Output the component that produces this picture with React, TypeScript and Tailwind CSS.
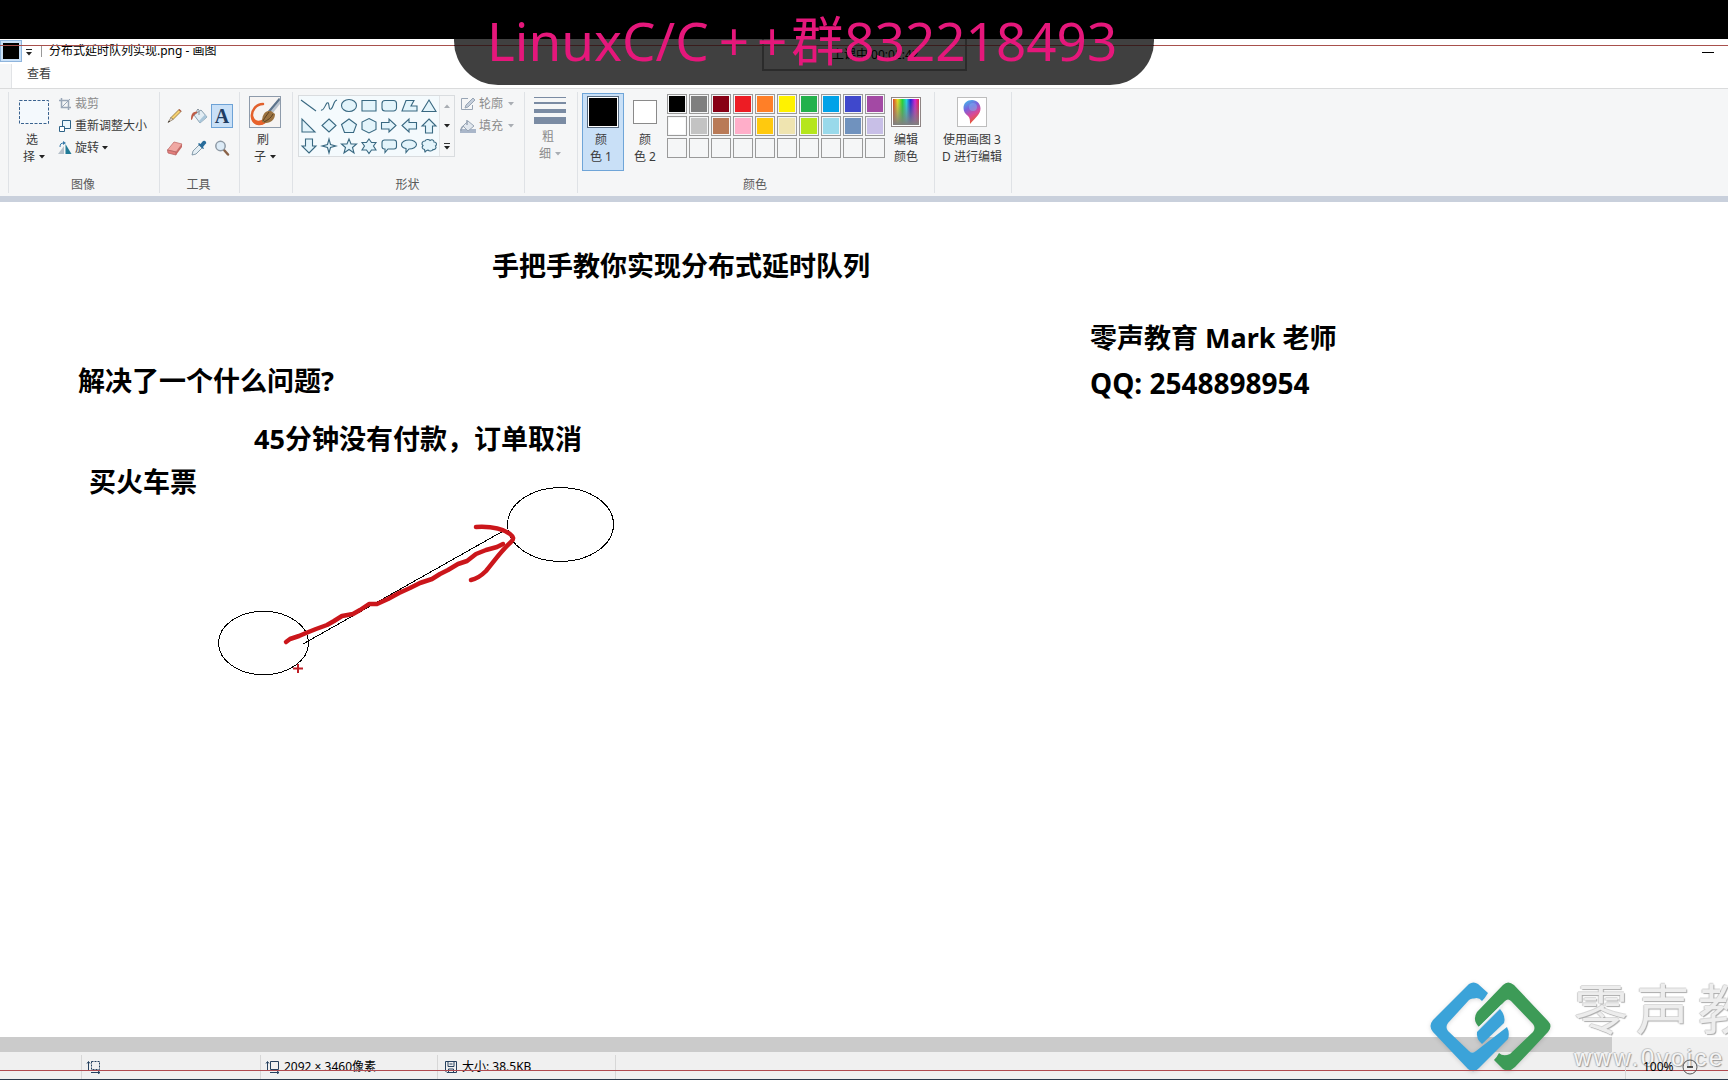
import type { ReactNode } from "react";

const paletteTop = ["#000000", "#7f7f7f", "#880015", "#ed1c24", "#ff7f27", "#fff200", "#22b14c", "#00a2e8", "#3f48cc", "#a349a4"];
const paletteMiddle = ["#ffffff", "#c3c3c3", "#b97a57", "#ffaec9", "#ffc90e", "#efe4b0", "#b5e61d", "#99d9ea", "#7092be", "#c8bfe7"];

const shapes: { name: string; d: string }[] = [
  { name: "直线", d: "M1 3 16 14" },
  { name: "曲线", d: "M1 13C4 14 5 8 7 6C10 4 8 14 11 12C14 10 13 4 17 3" },
  { name: "椭圆形", d: "M1.5 8.5a7.5 6 0 1 0 15 0a7.5 6 0 1 0 -15 0Z" },
  { name: "矩形", d: "M2 3.5H16V14H2Z" },
  { name: "圆角矩形", d: "M5 3.5H13.500a3 3 0 0 1 3 3V11a3 3 0 0 1 -3 3H5a3 3 0 0 1 -3 -3V6.500a3 3 0 0 1 3 -3Z" },
  { name: "多边形", d: "M6 3.500H14L11 9H17V14H2Z" },
  { name: "三角形", d: "M9 3 16 14.500H2Z" },
  { name: "直角三角形", d: "M2 2V15H15Z" },
  { name: "菱形", d: "M9 2 16 8.500 9 15 2 8.500Z" },
  { name: "五边形", d: "M9 2 16.500 7.500 13.500 15.500H4.500L1.500 7.500Z" },
  { name: "六边形", d: "M9 1.500 16 5V12.500L9 16 2 12.500V5Z" },
  { name: "右箭头", d: "M1.500 5.500H9V2L16 8.500 9 15V12H1.500Z" },
  { name: "左箭头", d: "M16.500 5.500H9V2L2 8.500 9 15V12H16.500Z" },
  { name: "向上箭头", d: "M9 2 16 9H12.500V16H5.500V9H2Z" },
  { name: "向下箭头", d: "M9 16 16 9H12.500V2H5.500V9H2Z" },
  { name: "四角星", d: "M9 2 10.500 7.500 16 9 10.500 10.500 9 16 7.500 10.500 2 9 7.500 7.500Z" },
  { name: "五角星", d: "M9 2 11 7H16.500L12.500 10.500 14 16 9 12.500 4 16 5.500 10.500 1.500 7H7Z" },
  { name: "六角星", d: "M9 2 11.500 5.500H16L13.500 9 16 13H11.500L9 16.500 6.500 13H2L4.500 9 2 5.500H6.500Z" },
  { name: "圆角矩形标注", d: "M4.500 3H14a2.500 2.500 0 0 1 2.500 2.500V9.500a2.500 2.500 0 0 1 -2.500 2.500H8L5 15.500V12H4.500a2.500 2.500 0 0 1 -2.500 -2.500V5.500a2.500 2.500 0 0 1 2.500 -2.500Z" },
  { name: "椭圆形标注", d: "M9 3C13 3 16.500 5 16.500 7.500S13 12 9 12L6 15.500 6 11.500C3 11 1.500 9.500 1.500 7.500C1.500 5 5 3 9 3Z" },
  { name: "云形标注", d: "M5 4C6 2 9 2 10 3.500C12 2 14 3 14 5C17 5 17 8 15.500 9C17 11 15 13 13 12.500C12 14.500 9 14.500 8 13C6 14 5 14 5 15.500L4.500 12.500C2 12 1.500 10 3 8.500C1 7 2 4 5 4Z" },
];

function Caret({ muted = false }: { muted?: boolean }) {
  return (
    <svg width="6" height="4" viewBox="0 0 6 4" className="inline-block shrink-0" aria-hidden="true">
      <path d="M0 0H6L3 3.500Z" fill={muted ? "#a9adb3" : "#222"} />
    </svg>
  );
}

function Group({ label, width, children }: { label?: string; width: string; children: ReactNode }) {
  return (
    <section className={`flex h-[101px] shrink-0 flex-col border-r border-[#dfe2e6] ${width}`}>
      <div className="flex h-[84px] items-start">{children}</div>
      <div className="pr-0.5 text-center leading-[17px] text-[#5a5a5a]">{label}</div>
    </section>
  );
}

/* ── Icons ── */
function CropIcon() {
  return (
    <svg width="14" height="14" viewBox="0 0 14 14" fill="none" stroke="#9aa7b8" aria-hidden="true">
      <path d="M3.500 1V10.500H13M1 3.500H10.500V13" strokeWidth="1.500" />
      <path d="M4 10 12 2" />
    </svg>
  );
}

function ResizeIcon() {
  return (
    <svg width="14" height="14" viewBox="0 0 14 14" fill="#fff" stroke="#2d6287" aria-hidden="true">
      <path d="M4.500 1.500H12.500V9.500H4.500Z" fill="#eaf6fc" />
      <path d="M1.500 7.500H6.500V12.500H1.500Z" />
    </svg>
  );
}

function RotateIcon() {
  return (
    <svg width="14" height="14" viewBox="0 0 14 14" aria-hidden="true">
      <path d="M6 5V13H0Z" fill="#b6c0ca" />
      <path d="M7.500 3 13.500 13H7.500Z" fill="#217a96" />
      <path d="M2 6C2 3 3 2 6 2" stroke="#3578a8" fill="none" />
      <path d="M5 0 8 2 5 4Z" fill="#3578a8" />
    </svg>
  );
}

function PencilIcon() {
  return (
    <svg width="16" height="16" viewBox="0 0 16 16" aria-hidden="true">
      <path d="M4 9.500 12 1.500 14 3.500 6 11.500Z" fill="#f5d06f" stroke="#8a6d34" strokeWidth=".8" />
      <path d="M11.500 2 12.500 1 14.500 3 13.500 4Z" fill="#b0604f" />
      <path d="M4 9.500 6 11.500 1 14.500Z" fill="#eadcc5" stroke="#6b5a44" strokeWidth=".6" />
      <path d="M2 12.500 3 13.500 1 14.500Z" fill="#222" />
    </svg>
  );
}

function BucketIcon() {
  return (
    <svg width="18" height="16" viewBox="0 0 18 16" aria-hidden="true">
      <path d="M4 7 11 2 17 9 10 15Z" fill="#e2edf4" stroke="#8aa0b0" />
      <path d="M10 15 17 9 15 6.500 9 13Z" fill="#a9c6da" />
      <path d="M9 7V2Q8 0 7 2V5" fill="none" stroke="#8d98a2" />
      <path d="M7 3.500C2 3.500 1 7 1 12C2 12 2.500 11 3 9C4 7 5 6 7 5Z" fill="#bd5b45" />
    </svg>
  );
}

function EraserIcon() {
  return (
    <svg width="18" height="16" viewBox="0 0 18 16" aria-hidden="true">
      <path d="M1.500 10 8 2 16 4 10 12Z" fill="#f0a8a3" stroke="#c2706d" strokeWidth=".8" />
      <path d="M1.500 10 10 12V15L2 13Z" fill="#e47e7b" stroke="#b46363" strokeWidth=".8" />
      <path d="M10 12 16 4V7L10 15Z" fill="#c66864" />
    </svg>
  );
}

function DropperIcon() {
  return (
    <svg width="16" height="16" viewBox="0 0 16 16" aria-hidden="true">
      <path d="M8 5 11 8 5 14 1 15 2 11Z" fill="#e4eef4" stroke="#6c8799" strokeWidth=".8" />
      <path d="M7 4 8 3 9.500 4 12 1Q14 0 15 2Q16 3 14 4.500L12 7 13 8.500 12 9Z" fill="#276c9b" />
    </svg>
  );
}

function MagnifierIcon() {
  return (
    <svg width="16" height="16" viewBox="0 0 16 16" aria-hidden="true">
      <path d="M10 10 14 14.500" stroke="#8a6247" strokeWidth="2.500" strokeLinecap="round" />
      <circle cx="6.500" cy="6" r="4.700" fill="#dcebf7" stroke="#8e9aa6" strokeWidth="1.500" />
    </svg>
  );
}

function BrushIcon() {
  return (
    <svg width="30" height="30" viewBox="0 0 30 30" aria-hidden="true">
      <path d="M0 0H30V30H0Z" fill="#f6f4f3" />
      <path d="M13 7C6 7 1 14 2 20C3 27 10 29 15 25" fill="none" stroke="#e2602c" strokeWidth="2.500" strokeLinecap="round" />
      <path d="M1 19C2 29 11 30 16 25L13 22C9 25 4 24 3 18Z" fill="#e8622b" />
      <path d="M29 1 18 14 22 17 30 7V1Z" fill="#b9c3ce" />
      <path d="M29 1 18 14 20 15 30 3Z" fill="#5d748b" />
      <path d="M18 14C14 15 12 19 12 25C18 28 25 24 25 17L21 14Z" fill="#9b7240" />
      <path d="M19 15C17 18 15 20 13 24M23 17C21 21 18 23 14 25" stroke="#5d4020" fill="none" />
    </svg>
  );
}

function RibbonToggle({ icon, label }: { icon: ReactNode; label: string }) {
  return (
    <button disabled className="flex h-[22px] items-center gap-[3px] text-[#8c8c8c]">
      {icon}
      <span>{label}</span>
      <span className="flex pl-0.5"><Caret muted /></span>
    </button>
  );
}

function Swatch({ color }: { color?: string }) {
  return (
    <button
      aria-label={color ?? "空白颜色"}
      className="size-5 border border-[#9a9a9a] p-px"
    >
      <span className="block size-full" style={{ background: color }} />
    </button>
  );
}

function Ribbon() {
  return (
    <div className="flex border-t border-[#dadbdc] bg-[#f5f6f7] pt-[3px] pl-2 h-[108px] overflow-hidden">
      <Group label="图像" width="w-[152px] border-l">
        <button className="mt-[7px] ml-[9px] flex w-8 flex-col items-center leading-[17px]">
          <svg width="32" height="26" viewBox="0 0 32 26" aria-hidden="true">
            <path d="M1.500 1.500H30.500V24.500H1.500Z" fill="#f4f9fd" stroke="#39628f" strokeDasharray="3 1.500" />
          </svg>
          <span className="pt-1.5 pr-1">选</span>
          <span className="flex items-center gap-1">择<Caret /></span>
        </button>
        <div className="mt-px ml-2 flex flex-col items-start">
          <button disabled className="flex h-[22px] items-center gap-[3px] text-[#8c8c8c]"><CropIcon />裁剪</button>
          <button className="flex h-[22px] items-center gap-[3px]"><ResizeIcon />重新调整大小</button>
          <button className="flex h-[22px] items-center gap-[3px]"><RotateIcon />旋转<Caret /></button>
        </div>
      </Group>

      <Group label="工具" width="w-[80px]">
        <div className="mt-3 ml-[3px] grid grid-cols-[24px_24px_22px] gap-y-2">
          <button aria-label="铅笔" className="flex h-6 items-center justify-center"><PencilIcon /></button>
          <button aria-label="用颜色填充" className="flex h-6 items-center justify-center"><BucketIcon /></button>
          <button className="h-6 border border-[#6da2d6] bg-[#c9e0f7] font-['Liberation_Serif',serif] text-xl leading-5 font-bold text-[#1f3d63]">A</button>
          <button aria-label="橡皮擦" className="flex h-6 items-center justify-center"><EraserIcon /></button>
          <button aria-label="颜色选取器" className="flex h-6 items-center justify-center"><DropperIcon /></button>
          <button aria-label="放大镜" className="flex h-6 items-center justify-center"><MagnifierIcon /></button>
        </div>
      </Group>

      <Group width="w-[53px]">
        <button className="mt-1 flex w-[50px] flex-col items-center leading-[17px]">
          <span className="border border-[#8e9bab]"><BrushIcon /></span>
          <span className="pt-[3px] pr-1">刷</span>
          <span className="flex items-center gap-1">子<Caret /></span>
        </button>
      </Group>

      <Group label="形状" width="w-[232px]">
        <div className="mt-[3px] ml-[5px] flex border border-[#d9dcdf]">
          <div className="grid grid-cols-7 bg-[#f4fafd]">
            {shapes.map((shape) => (
              <button key={shape.name} aria-label={shape.name} className="flex size-5 items-center justify-center">
                <svg width="18" height="18" viewBox="0 0 18 18" fill="#e3f4fb" stroke="#386881" strokeWidth="1.100" aria-hidden="true">
                  <path d={shape.d} fill={shape.name === "曲线" ? "none" : undefined} />
                </svg>
              </button>
            ))}
          </div>
          <div className="flex w-[15px] flex-col border-l border-[#e2e5e8]">
            <button aria-label="上一行" className="flex flex-1 rotate-180 items-center justify-center"><Caret muted /></button>
            <button aria-label="下一行" className="flex flex-1 items-center justify-center"><Caret /></button>
            <button aria-label="更多形状" className="flex flex-1 flex-col items-center justify-center gap-0.5">
              <span className="h-px w-1.5 bg-[#333]" />
              <Caret />
            </button>
          </div>
        </div>
        <div className="mt-px ml-[5px] flex flex-col">
          <RibbonToggle
            label="轮廓"
            icon={
              <svg width="16" height="14" viewBox="0 0 16 14" fill="none" stroke="#98a5b5" aria-hidden="true">
                <path d="M8 1.500H1.500V12.500H12.500V8" />
                <path d="M5 11 6 8 13 1 15 3 8 10Z" fill="#c4cedb" />
              </svg>
            }
          />
          <RibbonToggle
            label="填充"
            icon={
              <svg width="16" height="14" viewBox="0 0 16 14" aria-hidden="true">
                <path d="M0 10H16V14H0Z" fill="#a9b6c9" />
                <path d="M3 7 8 2 14 7 8 12Z" fill="#e1e7ee" stroke="#98a5b5" />
                <path d="M4 7C1 8 1 10 1 12M7 6V1" fill="none" stroke="#98a5b5" strokeWidth="1.500" />
              </svg>
            }
          />
        </div>
      </Group>

      <Group width="w-[53px]">
        <button disabled className="mt-[5px] flex w-[50px] flex-col items-center leading-[17px] text-[#8c8c8c]">
          <svg width="32" height="28" viewBox="0 0 32 28" fill="#7a8ba3" aria-hidden="true">
            <path d="M0 0H32V1H0ZM0 5H32V7H0ZM0 12H32V16H0ZM0 20H32V27H0Z" />
          </svg>
          <span className="pt-[3px] pr-1">粗</span>
          <span className="flex items-center gap-1">细<Caret muted /></span>
        </button>
      </Group>

      <Group label="颜色" width="w-[357px]">
        <button className="mt-px ml-1 flex h-[78px] w-[42px] flex-col items-center border border-[#6fa5d8] bg-[#c9e0f7] pt-0.5 leading-[17px]">
          <span className="size-8 border border-[#566a80] bg-white p-px">
            <span className="block size-full bg-black" />
          </span>
          <span className="pt-[3px] pr-1">颜</span>
          <span className="pr-1">色 1</span>
        </button>
        <button className="mt-2 ml-[5px] flex w-8 flex-col items-center leading-[17px]">
          <span className="size-6 border border-[#8a8a8a] bg-white" />
          <span className="pt-[7px]">颜</span>
          <span>色 2</span>
        </button>
        <div className="mt-0.5 ml-1.5 grid grid-cols-10 gap-0.5">
          {paletteTop.map((c) => <Swatch key={c} color={c} />)}
          {paletteMiddle.map((c) => <Swatch key={c} color={c} />)}
          {paletteTop.map((c) => <Swatch key={`empty-${c}`} />)}
        </div>
        <button className="mt-[5px] ml-1.5 flex w-[30px] flex-col items-center leading-[17px]">
          <span className="size-[30px] border border-[#8f8585] bg-white p-px">
            <span className="block size-full bg-[linear-gradient(to_top,#808080,transparent),linear-gradient(to_right,#e04020,#e8e020_18%,#20d830_36%,#20d8e8_52%,#2020d8_68%,#d820d8_85%,#e02040)]" />
          </span>
          <span className="pt-1 whitespace-nowrap">编辑</span>
          <span className="whitespace-nowrap">颜色</span>
        </button>
      </Group>

      <Group width="w-[77px]">
        <button className="mt-[5px] flex w-[74px] flex-col items-center leading-[17px]">
          <span className="flex size-[30px] items-center justify-center border border-[#bdbdbd] bg-white">
            <svg width="20" height="26" viewBox="0 0 20 26" aria-hidden="true">
              <defs>
                <linearGradient id="drop" x1="0" y1="0" x2=".4" y2="1">
                  <stop offset="0" stopColor="#38c8ee" />
                  <stop offset=".4" stopColor="#7a62dc" />
                  <stop offset=".7" stopColor="#d8489a" />
                  <stop offset="1" stopColor="#e8582e" />
                </linearGradient>
              </defs>
              <path d="M10 1C15 1 18.500 5 18.500 9.500C18.500 15 14 18 8 25C8 21 8 19 6 17C3 15 1.500 12 1.500 9C1.500 4 5 1 10 1Z" fill="url(#drop)" />
              <circle cx="11" cy="8" r="4" fill="#7bb8f2" opacity=".5" />
            </svg>
          </span>
          <span className="pt-1">使用画图 3</span>
          <span>D 进行编辑</span>
        </button>
      </Group>
    </div>
  );
}

/* ── Everything placed on the drawing surface ── */
function Canvas() {
  return (
    <main className="relative min-h-[500px] flex-1 overflow-hidden bg-white text-[27px] leading-9 font-bold whitespace-nowrap text-black">
      <h1 className="absolute top-[46px] left-[492px]">手把手教你实现分布式延时队列</h1>
      <p className="absolute top-[118px] left-[1090px]">零声教育 Mark 老师</p>
      <p className="absolute top-[163px] left-[1090px] text-[28px]">QQ: 2548898954</p>
      <p className="absolute top-[161px] left-[78px]">解决了一个什么问题?</p>
      <p className="absolute top-[219px] left-[254px]">45分钟没有付款，订单取消</p>
      <p className="absolute top-[262px] left-[89px]">买火车票</p>
      <svg className="absolute top-[268px] left-[200px]" width="440" height="220" viewBox="0 0 440 220" fill="none" aria-hidden="true">
        <g stroke="#000" shapeRendering="crispEdges">
          <ellipse cx="63.500" cy="173" rx="45" ry="31.700" />
          <ellipse cx="360.500" cy="54.500" rx="53" ry="37" />
          <path d="M103 174 305 60" />
        </g>
        <g stroke="#cb161b" strokeWidth="4.500" strokeLinecap="round" strokeLinejoin="round">
          <path d="M86 172 90 169 99 166 106 163 116 159 127 155 134 151 142 146 153 144 160 140 169 134 177 134 188 129 199 123 210 118 220 113 232 109 240 104 248 100 258 94 267 91 276 84 286 80 297 77 303 74" />
          <path d="M276 57C293 56 303 59 310 64C314 67 314 69 311 72C302 80 295 90 286 101C280 107 276 109 271 110" />
        </g>
        <path d="M93 198.500H103M98 194V203" stroke="#c01f27" strokeWidth="2" />
      </svg>
    </main>
  );
}

function StatusBar() {
  return (
    <footer className="flex h-7 border-b border-[#2c3a4c] bg-[#f0f0f0] pt-[3px] leading-6 text-black">
      <div className="w-[82px] border-r border-[#d7d7d7]" />
      <div className="flex w-[179px] items-center border-r border-[#d7d7d7] pl-1">
        <svg width="16" height="14" viewBox="0 0 16 14" fill="none" stroke="#25405e" aria-hidden="true">
          <path d="M2.500 2V11M1 3.500 2.500 1.500 4 3.500M5 12.500H14M12 11 14 12.500 12 14" />
          <path d="M5.500 1.500H13.500V9.500H5.500Z" strokeDasharray="2 1" />
        </svg>
      </div>
      <div className="flex w-[177px] items-center gap-[3px] border-r border-[#d7d7d7] pl-1">
        <svg width="16" height="14" viewBox="0 0 16 14" fill="none" stroke="#25405e" aria-hidden="true">
          <path d="M2.500 2V11M1 3.500 2.500 1.500 4 3.500M5 12.500H14M12 11 14 12.500 12 14" />
          <path d="M5.500 1.500H13.500V9.500H5.500Z" />
        </svg>
        <span>2092 × 3460像素</span>
      </div>
      <div className="flex w-[178px] items-center gap-[5px] border-r border-[#d7d7d7] pl-[7px]">
        <svg width="12" height="12" viewBox="0 0 12 12" fill="none" stroke="#25405e" aria-hidden="true">
          <path d="M.5 .5H11.500V11.500H2L.5 10ZM3 .5V5.500H9V.5M3.500 11V8H8.500V11M4.500 3H7.500" />
        </svg>
        <span>大小: 38.5KB</span>
      </div>
      <div className="relative z-10 ml-auto flex w-[103px] items-center gap-2 border-l border-[#d7d7d7] pl-[17px]">
        <span>100%</span>
        <button aria-label="缩小">
          <svg width="16" height="16" viewBox="0 0 16 16" fill="none" stroke="#555" aria-hidden="true">
            <circle cx="8" cy="8" r="7" />
            <path d="M5 8H11" stroke="#222" strokeWidth="1.500" />
          </svg>
        </button>
      </div>
    </footer>
  );
}

function Watermark() {
  return (
    <div className="pointer-events-none absolute right-0 bottom-0 flex h-[104px] w-[304px] items-start overflow-hidden">
      <svg width="134" height="100" viewBox="0 0 134 100" className="shrink-0 drop-shadow-sm" aria-hidden="true">
        <path
          d="M45 8Q49.500 5 54 8L64 17Q61 22 58 25Q55 21 50 22.500Q47 22 45 24L24 47Q21 51 24 55L45 75Q48 78 52 75L83 51Q86 57 84 63L55 92Q50 98 44 93L9 56Q4 50 9 44Z"
          fill="#3ba3d9"
        />
        <path d="M76 33Q82 40 80 47L58 68Q52 63 53 56Z" fill="#3ba3d9" />
        <path
          d="M79 9Q84 4 90 9L124 45Q129 50 124 56L91 91Q85 97 79 93L70 84Q73 81 75 77Q79 81 86 78L109 56Q112 52 109 48L87 25Q84 22 81 25L55 51Q48 44 53 36Z"
          fill="#3d9b57"
        />
        <path d="M54.500 52 78 29" stroke="#edf6fa" strokeWidth="1.500" />
      </svg>
      <div className="whitespace-nowrap">
        <div className="flex gap-2 pl-4 text-[54px] leading-[66px] text-[#ededed] [text-shadow:1px_1px_1px_#aaa,-1px_0_1px_#ccc,0_-1px_0_#ddd]">
          <span>零</span>
          <span>声</span>
          <span>教</span>
        </div>
        <div className="pl-4 font-['Liberation_Sans',sans-serif] text-2xl leading-8 tracking-widest text-[#f4f4f4] [text-shadow:1px_1px_1px_#999,-1px_0_1px_#bbb,0_-1px_0_#ccc]">
          www.0voice
        </div>
      </div>
    </div>
  );
}

export default function App() {
  return (
    <div className="relative flex min-h-screen flex-col overflow-hidden bg-white font-['Noto_Sans','Noto_Sans_CJK_SC',sans-serif] text-xs text-[#3b3b3b]">
      <div className="h-[39px] bg-black" />

      <header className="flex h-[25px] items-start text-black">
        <button aria-label="画图" className="mt-px flex size-[22px] items-center justify-center border border-[#8eb4dc] bg-[#c9e0f7]">
          <span className="size-4 bg-black" />
        </button>
        <button aria-label="自定义快速访问工具栏" className="mt-[10px] ml-1 flex flex-col items-center gap-0.5">
          <span className="h-px w-1.5 bg-[#222]" />
          <Caret />
        </button>
        <span className="mt-1.5 ml-[9px] h-3 w-px bg-[#999]" />
        <span className="ml-[7px] leading-6">分布式延时队列实现.png - 画图</span>
        <button aria-label="最小化" className="mt-[10px] mr-[14px] ml-auto h-1.5 w-3">
          <span className="block h-px bg-black" />
        </button>
      </header>

      <nav className="flex h-6">
        <div className="w-3 border-r border-[#e1e3e6] bg-[#f5f6f7]" />
        <button className="h-5 px-[15px] leading-[18px]">查看</button>
      </nav>

      <Ribbon />
      <div className="h-1.5 bg-[#c9d0dc]" />
      <Canvas />
      <div className="flex h-[15px] bg-[#f0f0f0]">
        <div className="mr-[116px] flex-1 bg-[#cbcbcb]" />
      </div>
      <StatusBar />

      {/* Class banner */}
      <div className="absolute top-[39px] left-[454px] h-[46px] w-[700px] rounded-b-[44px] bg-[#404040]">
        <div className="absolute top-0 left-[308px] h-8 w-[205px] border-2 border-t-0 border-[#2b2b2b] pl-[68px] leading-8 text-black">
          上课中 00:02:42
        </div>
        <div className="absolute inset-x-0 top-1.5 h-px bg-[#3a1c1c]" />
      </div>
      <div className="absolute top-0 left-[487px] flex text-[53px] leading-[82px] whitespace-nowrap text-[#e5177b]">
        <span className="pr-1.5">LinuxC/C</span>
        <span className="px-1">+</span>
        <span className="px-1">+</span>
        <span>群832218493</span>
      </div>

      <Watermark />

      {/* Recording frame edges */}
      <div className="absolute top-[45px] left-0 h-px w-[454px] bg-[#a8504c]" />
      <div className="absolute top-[45px] right-0 left-[1154px] h-px bg-[#a8504c]" />
      <div className="absolute inset-x-0 bottom-[9px] h-px bg-[#b04a50]" />
    </div>
  );
}
